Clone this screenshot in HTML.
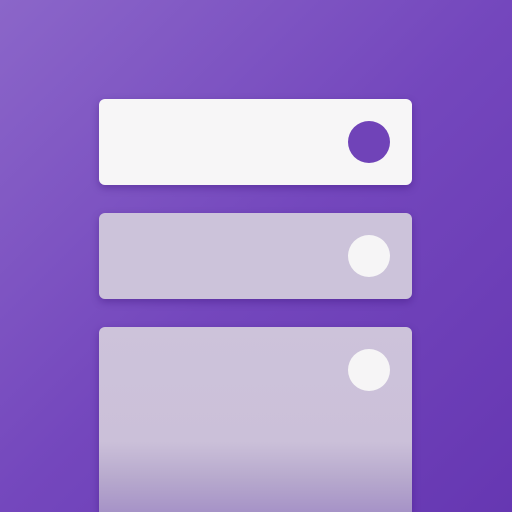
<!DOCTYPE html>
<html><head><style>
html,body{margin:0;padding:0;width:512px;height:512px;overflow:hidden}
body{position:relative;background:linear-gradient(135deg,#8b66c9 0%,#7447bd 50%,#6637b2 100%)}
.c{position:absolute;left:99px;width:313px;border-radius:6px;box-shadow:0 3px 8px rgba(50,10,110,.35)}
.o{position:absolute;left:249px;width:42px;height:42px;border-radius:50%}
</style></head><body>
<div class="c" style="top:99px;height:86px;background:#f7f6f7">
 <div class="o" style="top:22px;background:#7043b8"></div>
</div>
<div class="c" style="top:213px;height:86px;background:#ccc3da">
 <div class="o" style="top:22px;background:#f6f5f6"></div>
</div>
<div class="c" style="top:327px;height:185px;border-radius:6px 6px 0 0;background:linear-gradient(180deg,#cdc3da 0%,#cbc0d9 62%,#b7a9cd 82%,#a693c7 100%)">
 <div class="o" style="top:22px;background:#f6f5f6"></div>
</div>
</body></html>
